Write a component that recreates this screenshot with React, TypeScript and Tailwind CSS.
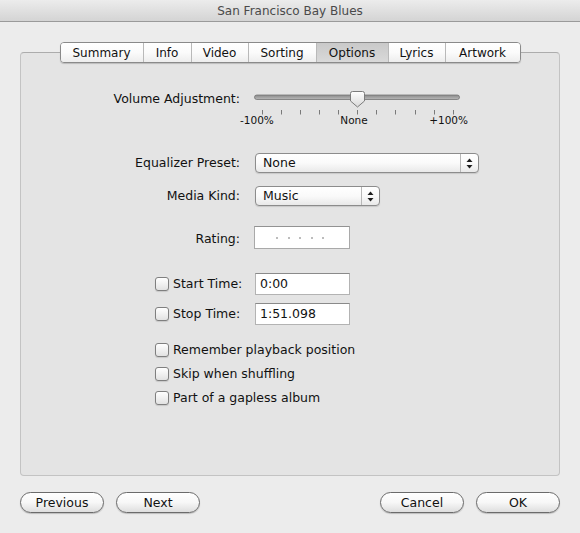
import React from "react";

const tabs: { label: string; w: string; selected?: boolean }[] = [
  { label: "Summary", w: "w-[82px]" },
  { label: "Info", w: "w-[48px]" },
  { label: "Video", w: "w-[57px]" },
  { label: "Sorting", w: "w-[68px]" },
  { label: "Options", w: "w-[72px]", selected: true },
  { label: "Lyrics", w: "w-[57px]" },
  { label: "Artwork", w: "w-[75px]" },
];

function Arrows() {
  return (
    <svg width="7" height="11" viewBox="0 0 7 11">
      <path d="M3.5 0.5 L6.5 4 L0.5 4 Z" fill="#1e1e1e" />
      <path d="M0.5 7 L6.5 7 L3.5 10.5 Z" fill="#1e1e1e" />
    </svg>
  );
}

function Popup({ value, w }: { value: string; w: string }) {
  return (
    <div
      className={`${w} h-[20px] rounded-[4px] border border-[#8c8c8c] bg-gradient-to-b from-white via-[#fafafa] to-[#e9e9e9] flex items-center shadow-[0_1px_1px_rgba(0,0,0,0.12)]`}
    >
      <span className="flex-1 pl-[7px] leading-[18px]">{value}</span>
      <div className="w-[18px] h-full border-l border-[#b8b8b8] flex items-center justify-center">
        <Arrows />
      </div>
    </div>
  );
}

function Checkbox() {
  return (
    <div className="w-[14px] h-[14px] rounded-[3px] border border-[#7f7f7f] bg-gradient-to-b from-white to-[#e2e2e2] shadow-[0_1px_1px_rgba(0,0,0,0.12)] shrink-0" />
  );
}

function Field({ value }: { value: string }) {
  return (
    <div className="w-[95px] h-[22px] bg-white border border-[#b3b3b3] border-t-[#8a8a8a] flex items-center pl-[4px] leading-[18px]">
      {value}
    </div>
  );
}

function Button({ label }: { label: string }) {
  return (
    <div className="w-[84px] h-[21px] rounded-full border border-[#6b6b6b] bg-gradient-to-b from-white via-[#f7f7f7] to-[#dedede] shadow-[0_1px_1px_rgba(0,0,0,0.2)] flex items-center justify-center leading-[18px]">
      {label}
    </div>
  );
}

function Slider() {
  const ticks = Array.from({ length: 11 }, (_, i) => 21.7 + 19.1 * i);
  return (
    <div className="flex flex-col w-[230px]">
      <svg width="230" height="28" viewBox="0 0 230 28">
        <defs>
          <linearGradient id="trk" x1="0" y1="0" x2="0" y2="1">
            <stop offset="0" stopColor="#8a8a8a" />
            <stop offset="1" stopColor="#b9b9b9" />
          </linearGradient>
          <linearGradient id="thm" x1="0" y1="0" x2="0" y2="1">
            <stop offset="0" stopColor="#ffffff" />
            <stop offset="1" stopColor="#d9d9d9" />
          </linearGradient>
        </defs>
        <rect x="14.5" y="7" width="205" height="4.5" rx="2.25" fill="url(#trk)" stroke="#737373" strokeWidth="0.8" />
        {ticks.map((x, i) => (
          <line key={i} x1={Math.round(x) + 0.5} y1="22" x2={Math.round(x) + 0.5} y2="26.5" stroke="#7a7a7a" strokeWidth="1" />
        ))}
        <path
          d="M110.5 5.5 Q110.5 3.5 112.5 3.5 L122.5 3.5 Q124.5 3.5 124.5 5.5 L124.5 13 L117.5 19 L110.5 13 Z"
          fill="url(#thm)"
          stroke="#7c7c7c"
          strokeWidth="1"
        />
      </svg>
      <div className="flex justify-between w-[228px] text-[10.5px] leading-[12px] -mt-[2px]">
        <span>-100%</span>
        <span className="pl-[5px]">None</span>
        <span>+100%</span>
      </div>
    </div>
  );
}

export default function App() {
  return (
    <div className="w-[580px] h-[533px] bg-[#ececec] flex flex-col font-['DejaVu_Sans',sans-serif] text-[12.5px] text-[#111] overflow-hidden">
      <div className="h-[22px] shrink-0 bg-gradient-to-b from-[#ececec] to-[#d4d4d4] border-b border-[#9a9a9a] flex items-center justify-center text-[12px] text-[#4a4a4a]">
        San Francisco Bay Blues
      </div>

      <div className="mt-[30px] mx-[20px] h-[424px] shrink-0 rounded-[4px] border border-[#c3c3c3] border-t-[#acacac] bg-[#e4e4e4] flex flex-col">
        <div className="-mt-[11px] flex justify-center">
          <div className="flex h-[21px] rounded-[4px] border border-[#8a8a8a] overflow-hidden shadow-[0_1px_1px_rgba(0,0,0,0.18)] text-[12px]">
            {tabs.map((t, i) => (
              <div
                key={t.label}
                className={`${t.w} flex items-center justify-center leading-[18px] ${i > 0 ? "border-l border-[#b9b9b9]" : ""} ${
                  t.selected
                    ? "bg-gradient-to-b from-[#c9c9c9] to-[#d9d9d9]"
                    : "bg-gradient-to-b from-white via-[#fbfbfb] to-[#ededed]"
                }`}
              >
                {t.label}
              </div>
            ))}
          </div>
        </div>

        <div className="mt-[25px] flex items-start">
          <div className="w-[219px] text-right mt-[3px] leading-[16px]">Volume Adjustment:</div>
          <Slider />
        </div>

        <div className="mt-[27px] flex items-center">
          <div className="w-[219px] text-right leading-[16px]">Equalizer Preset:</div>
          <div className="ml-[15px]">
            <Popup value="None" w="w-[224px]" />
          </div>
        </div>

        <div className="mt-[13px] flex items-center">
          <div className="w-[219px] text-right leading-[16px]">Media Kind:</div>
          <div className="ml-[15px]">
            <Popup value="Music" w="w-[125px]" />
          </div>
        </div>

        <div className="mt-[20px] flex items-center">
          <div className="w-[219px] text-right leading-[16px] mt-[2px]">Rating:</div>
          <div className="ml-[14px] w-[96px] h-[23px] bg-white border border-[#a9a9a9] border-t-[#929292] flex items-center pl-[21px] gap-[9.6px]">
            {[0, 1, 2, 3, 4].map((i) => (
              <div key={i} className="w-[2px] h-[2px] bg-[#bcbcbc]" />
            ))}
          </div>
        </div>

        <div className="mt-[24px] flex items-center">
          <div className="w-[234px] shrink-0 pl-[134px] flex items-center gap-[4px] leading-[16px] whitespace-nowrap">
            <Checkbox />
            <span>Start Time:</span>
          </div>
          <Field value="0:00" />
        </div>

        <div className="mt-[8px] flex items-center">
          <div className="w-[234px] shrink-0 pl-[134px] flex items-center gap-[4px] leading-[16px] whitespace-nowrap">
            <Checkbox />
            <span>Stop Time:</span>
          </div>
          <Field value="1:51.098" />
        </div>

        <div className="mt-[17px] flex flex-col gap-[8px] pl-[134px]">
          {["Remember playback position", "Skip when shuffling", "Part of a gapless album"].map((l) => (
            <div key={l} className="h-[16px] flex items-center gap-[4px] leading-[16px] whitespace-nowrap">
              <Checkbox />
              <span>{l}</span>
            </div>
          ))}
        </div>
      </div>

      <div className="mt-[16px] px-[20px] flex justify-between">
        <div className="flex gap-[12px]">
          <Button label="Previous" />
          <Button label="Next" />
        </div>
        <div className="flex gap-[12px]">
          <Button label="Cancel" />
          <Button label="OK" />
        </div>
      </div>
    </div>
  );
}
